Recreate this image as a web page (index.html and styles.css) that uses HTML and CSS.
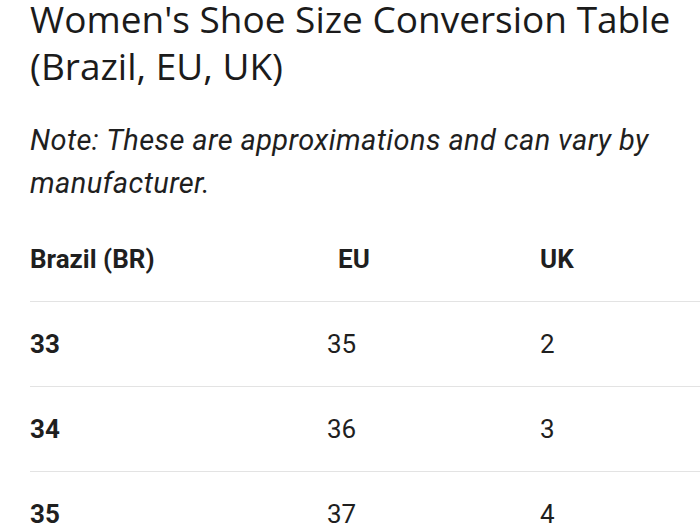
FILE: index.html
```html
<!DOCTYPE html>
<html>
<head>
<meta charset="utf-8">
<link rel="stylesheet" href="styles.css">
</head>
<body>
<main class="page">
  <h1 class="title">Women's Shoe Size Conversion Table (Brazil, EU, UK)</h1>
  <p class="note">Note: These are approximations and can vary by manufacturer.</p>
  <div class="table">
    <div class="row head">
      <div class="cell c1">Brazil (BR)</div>
      <div class="cell c2">EU</div>
      <div class="cell c3">UK</div>
    </div>
    <div class="row">
      <div class="cell c1 strong">33</div>
      <div class="cell c2">35</div>
      <div class="cell c3">2</div>
    </div>
    <div class="row">
      <div class="cell c1 strong">34</div>
      <div class="cell c2">36</div>
      <div class="cell c3">3</div>
    </div>
    <div class="row">
      <div class="cell c1 strong">35</div>
      <div class="cell c2">37</div>
      <div class="cell c3">4</div>
    </div>
  </div>
</main>
</body>
</html>
```
FILE: styles.css
```css
html, body {
  margin: 0;
  padding: 0;
  background: #ffffff;
  color: #1f1f1f;
}
.page {
  padding: 0 0 0 30px;
  overflow: hidden;
  height: 525px;
}
.title {
  font-family: "Open Sans", sans-serif;
  font-weight: 400;
  font-size: 37px;
  line-height: 47px;
  margin: -5px 0 0 0;
  color: #1b1b1b;
}
.note {
  font-family: Roboto, sans-serif;
  font-style: italic;
  font-size: 29px;
  letter-spacing: 0.4px;
  line-height: 43px;
  margin: 30px 0 0 0;
  color: #1f1f1f;
}
.table {
  margin-top: 39px;
  font-family: Roboto, sans-serif;
}
.row {
  display: grid;
  grid-template-columns: 297px 213px 1fr;
  height: 84px;
  align-items: center;
  border-top: 1px solid #e3e3e3;
  font-size: 26px;
}
.row.head {
  border-top: none;
  height: 57px;
  align-items: start;
  font-weight: 700;
}
.head .c2 { padding-left: 11px; }
.strong { font-weight: 700; }
```
